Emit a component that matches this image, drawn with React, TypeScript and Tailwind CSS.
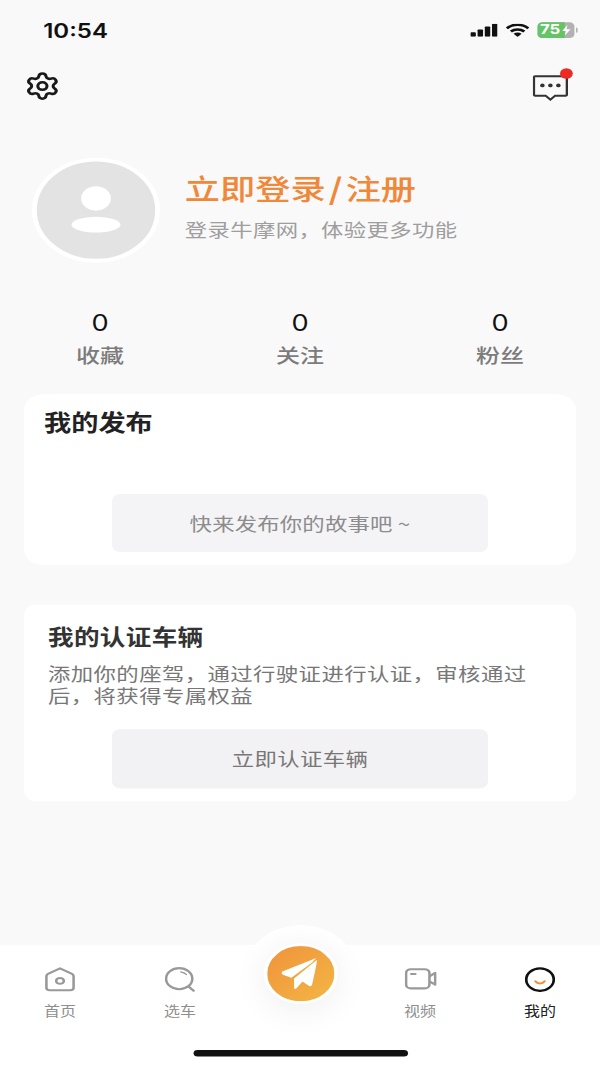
import { Settings } from 'lucide-react'

const cjk = { fontFamily: '"Noto Sans CJK SC", "Noto Sans", sans-serif' }

function StatusBar() {
  return (
    <div className="flex h-[44px] items-center justify-between pl-[27px] pr-[14px] pt-[2px]">
      <span className="text-[15px] font-semibold leading-none text-[#111]" style={{ fontFamily: 'Inter, sans-serif' }}>
        10:54
      </span>
      <div className="flex items-center gap-[5px]">
        <svg width="17" height="10" viewBox="0 0 17 10" fill="#111">
          <rect x="0" y="6.5" width="3.4" height="3.5" rx="0.6" />
          <rect x="4.5" y="4.5" width="3.4" height="5.5" rx="0.6" />
          <rect x="9" y="2.2" width="3.4" height="7.8" rx="0.6" />
          <rect x="13.5" y="0" width="3.4" height="10" rx="0.6" />
        </svg>
        <svg width="15" height="10" viewBox="0 0 15 10" fill="none" stroke="#111" strokeWidth="1.9">
          <path d="M0.8 3.6C4.6 0 10.4 0 14.2 3.6" />
          <path d="M3.3 6C5.6 3.9 9.4 3.9 11.7 6" />
          <path d="M7.5 10.2L5 7.6C6.4 6.4 8.6 6.4 10 7.6Z" fill="#111" stroke="none" />
        </svg>
        <div className="flex items-center">
          <div className="relative flex h-[12px] w-[23px] items-center rounded-[3px] bg-[#b2b2b2]">
            <div className="flex h-full w-[17px] items-center rounded-l-[3px] bg-[#64c466] pl-[1.5px]">
              <span className="text-[10.5px] font-bold leading-none text-white" style={{ fontFamily: 'Inter, sans-serif' }}>
                75
              </span>
            </div>
            <svg className="absolute right-[2px] top-[2px]" width="6" height="8" viewBox="0 0 6 8" fill="#fff">
              <path d="M3.6 0L0.4 4.5H2.6L2 8L5.6 3.2H3.2Z" />
            </svg>
          </div>
          <div className="ml-[1px] h-[4px] w-[1px] rounded-r-full bg-[#b2b2b2]" />
        </div>
      </div>
    </div>
  )
}

function TopActions() {
  return (
    <div className="flex h-[34px] items-start justify-between pl-[15px] pr-[20px]">
      <Settings className="mt-[10px] h-[23px] w-[23px] text-[#1a1a1a]" strokeWidth={2} />
      <div className="relative mt-[12.5px] h-[20px] w-[22px]">
        <svg width="22" height="20" viewBox="0 0 22 20" fill="none" stroke="#333" strokeWidth="1.5">
          <path d="M1.5 1H20.5C21 1 21.3 1.3 21.3 1.8V15C21.3 15.5 21 15.8 20.5 15.8H14L11 18.8L8 15.8H1.5C1 15.8 0.7 15.5 0.7 15V1.8C0.7 1.3 1 1 1.5 1Z" />
          <circle cx="6" cy="8" r="1.4" fill="#333" stroke="none" />
          <circle cx="11" cy="8" r="1.4" fill="#333" stroke="none" />
          <circle cx="16" cy="8" r="1.4" fill="#333" stroke="none" />
        </svg>
        <span className="absolute right-[-3px] top-[-5px] h-[8px] w-[8px] rounded-full bg-[#ee2a24]" />
      </div>
    </div>
  )
}

function Profile() {
  return (
    <div className="mt-[42px] flex items-center gap-[15.5px] pl-[20px]">
      <div className="h-[80px] w-[80px] rounded-full border-[3px] border-white bg-[#e3e3e3]">
        <svg width="74" height="74" viewBox="0 0 74 74" fill="#fff">
          <ellipse cx="37" cy="28" rx="9.3" ry="9.3" />
          <ellipse cx="37" cy="48" rx="15.3" ry="6" />
        </svg>
      </div>
      <div className="flex flex-col pb-[9px]">
        <span className="text-[22px] font-medium leading-[31px] text-[#f0883a]">
          立即登录<span className="mx-[2px] font-semibold">/</span>注册
        </span>
        <span className="mt-[6px] text-[14px] leading-[20px] tracking-[0.2px] text-[#9e9e9e]">登录牛摩网，体验更多功能</span>
      </div>
    </div>
  )
}

function Stat({ label }: { label: string }) {
  return (
    <div className="flex flex-col items-center">
      <span className="text-[17px] leading-[20px] text-[#111]" style={{ fontFamily: 'Inter, sans-serif' }}>
        0
      </span>
      <span className="mt-[3.5px] text-[15px] font-medium leading-[20px] text-[#7c7c7c]">{label}</span>
    </div>
  )
}

function HomeIcon() {
  return (
    <svg width="19" height="19" viewBox="0 0 19 19" fill="none" stroke="#999" strokeWidth="1.6">
      <path d="M9.5 1L17 5.2C17.6 5.6 18 6.2 18 7V15.5C18 16.8 17.2 17.6 16 17.6H3C1.8 17.6 1 16.8 1 15.5V7C1 6.2 1.4 5.6 2 5.2Z" strokeLinejoin="round" />
      <ellipse cx="9.5" cy="10.5" rx="2.4" ry="2.2" />
    </svg>
  )
}

function SearchIcon() {
  return (
    <svg width="19" height="19" viewBox="0 0 19 19" fill="none" stroke="#999" strokeWidth="1.6" strokeLinecap="round">
      <ellipse cx="9" cy="8.8" rx="8.2" ry="8" />
      <path d="M15 15L18 18" />
      <path d="M10 3.6C11.4 3.9 12.6 4.6 13.4 5.6" strokeWidth="1" />
    </svg>
  )
}

function VideoIcon() {
  return (
    <svg width="20" height="18" viewBox="0 0 20 18" fill="none" stroke="#999" strokeWidth="1.6" strokeLinejoin="round">
      <rect x="0.8" y="1.6" width="14.6" height="14.6" rx="3" />
      <path d="M15.4 7L19 4.4V13.4L15.4 10.8" />
      <path d="M4 5.2H6.6" strokeLinecap="round" />
    </svg>
  )
}

function MeIcon() {
  return (
    <svg width="19" height="19" viewBox="0 0 19 19" fill="none" strokeLinecap="round">
      <ellipse cx="9.5" cy="9.5" rx="8.6" ry="8.6" stroke="#111" strokeWidth="1.7" />
      <path d="M6.6 10.8C8 13 11 13 12.4 10.8" stroke="#f0903a" strokeWidth="1.5" />
    </svg>
  )
}

function TabItem({ icon, label, active }: { icon: React.ReactNode; label: string; active?: boolean }) {
  return (
    <div className="flex flex-col items-center">
      <div className="flex h-[20px] items-center justify-center">{icon}</div>
      <span className={active ? 'mt-[7px] text-[10px] leading-[14px] text-[#222]' : 'mt-[7px] text-[10px] leading-[14px] text-[#8e8e8e]'}>
        {label}
      </span>
    </div>
  )
}

function TabBar() {
  return (
    <div className="relative mt-auto flex h-[93px] flex-col bg-white pt-[16px]">
      <div className="absolute left-[152.5px] top-[-15px] h-[70px] w-[70px] rounded-full bg-white" />
      <div className="absolute left-[164.5px] top-[-1px] flex h-[46px] w-[46px] items-center justify-center rounded-full border-2 border-white bg-linear-to-br from-[#ef933c] to-[#f3b644] shadow-[0_4px_24px_rgba(0,0,0,0.07)]">
        <svg className="mr-[1px]" width="22.5" height="24" viewBox="118 130 107 92" preserveAspectRatio="none" fill="#fff">
          <path d="M221 130.5L122 169Q113 174 122 179L147 188L208 144Z" />
          <path d="M225 134L155 190V217Q157 224 163 218L180 199L200 212Q207 214 209 207Z" />
        </svg>
      </div>
      <div className="relative grid grid-cols-5">
        <TabItem icon={<HomeIcon />} label="首页" />
        <TabItem icon={<SearchIcon />} label="选车" />
        <div />
        <TabItem icon={<VideoIcon />} label="视频" />
        <TabItem icon={<MeIcon />} label="我的" active />
      </div>
      <div className="mx-auto mb-[8px] mt-auto h-[5px] w-[134px] rounded-full bg-[#111]" />
    </div>
  )
}

export default function App() {
  return (
    <div className="h-[1067px] w-[600px] overflow-hidden bg-[#f9f9f9]">
      {/* reference is a 375x812 screen stretched to 600x1067 */}
      <div className="flex h-[812px] w-[375px] origin-top-left scale-x-[1.6] scale-y-[1.314] flex-col" style={cjk}>
        <StatusBar />
        <TopActions />
        <Profile />
        <div className="mt-[36px] grid grid-cols-3">
          <Stat label="收藏" />
          <Stat label="关注" />
          <Stat label="粉丝" />
        </div>
        <div className="mx-[15px] mt-[20.5px] flex h-[130px] flex-col rounded-[12px] bg-white pb-[10px]">
          <h2 className="pl-[12.5px] pt-[8px] text-[17px] font-semibold leading-[25px] text-[#222]">我的发布</h2>
          <div className="mx-auto mt-auto flex h-[44px] w-[235px] items-center justify-center rounded-[5px] bg-[#f4f4f6] text-[14px] tracking-[0.1px] text-[#8c8c8c]">
            快来发布你的故事吧 ~
          </div>
        </div>
        <div className="mx-[15px] mt-[30px] flex h-[150px] flex-col rounded-[8px] bg-white pb-[10px] pl-[15px] pr-[15px]">
          <h2 className="pt-[12.5px] text-[16px] font-semibold leading-[22px] tracking-[0.2px] text-[#333]">我的认证车辆</h2>
          <p className="mt-[9px] text-[14px] leading-[17px] tracking-[0.24px] text-[#777]">
            添加你的座驾，通过行驶证进行认证，审核通过后，将获得专属权益
          </p>
          <div className="mx-auto mt-auto flex h-[45px] w-[235px] items-center justify-center rounded-[5px] bg-[#f2f2f4] text-[14px] tracking-[0.2px] text-[#777]">
            立即认证车辆
          </div>
        </div>
        <TabBar />
      </div>
    </div>
  )
}
